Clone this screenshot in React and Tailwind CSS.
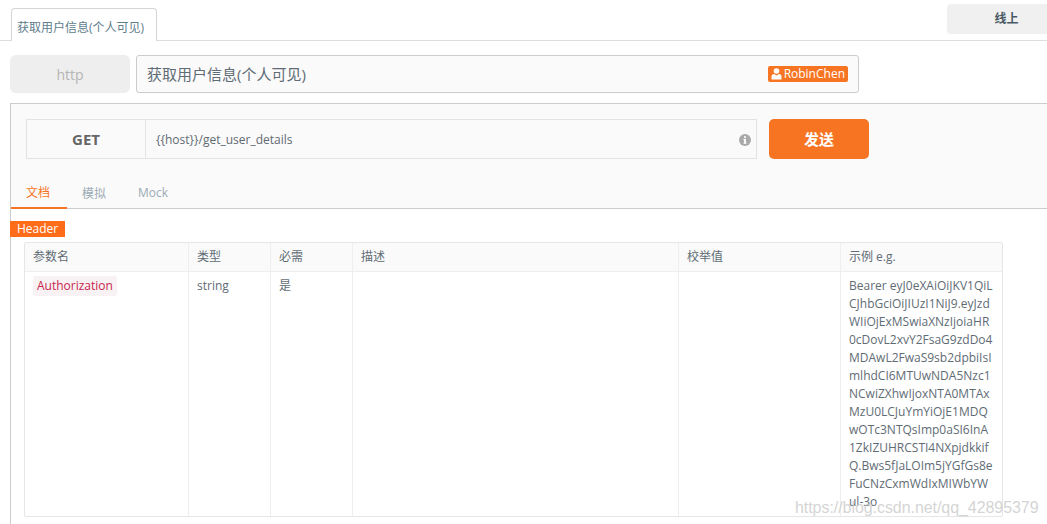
const font = { fontFamily: '"Open Sans","Noto Sans CJK SC",sans-serif' };
const lines = ["Bearer eyJ0eXAiOiJKV1QiL","CJhbGciOiJIUzI1NiJ9.eyJzd","WIiOjExMSwiaXNzIjoiaHR","0cDovL2xvY2FsaG9zdDo4","MDAwL2FwaS9sb2dpbiIsI","mlhdCI6MTUwNDA5Nzc1","NCwiZXhwIjoxNTA0MTAx","MzU0LCJuYmYiOjE1MDQ","wOTc3NTQsImp0aSI6InA","1ZkIZUHRCSTI4NXpjdkkif","Q.Bws5fJaLOIm5jYGfGs8e","FuCNzCxmWdIxMIWbYW","ul-3o"];
const Cell = ({ className = "", children }) => <div className={`px-2 border-r border-[#eeeeee] ${className}`}>{children}</div>;
const cols = ["w-[164px]", "w-[82px]", "w-[82px]", "w-[326px]", "w-[162px]", "flex-1 border-r-0"];
const heads = ["参数名", "类型", "必需", "描述", "校举值", "示例 e.g."];

export default function App() {
  return (
    <div className="relative w-[1047px] h-[524px] overflow-hidden bg-white text-[#55636d]" style={font}>
      <div className="flex items-start justify-between h-[41px] border-b border-[#dddddd] pl-[11px]">
        <div className="mt-2 w-[146px] h-[33px] bg-white border border-b-0 border-[#d4d4d4] rounded-t-[4px] text-[12px] text-[#607d8b] flex items-center pl-[5px] pt-[5px] whitespace-nowrap">获取用户信息(个人可见)</div>
        <div className="mt-1 w-[100px] h-[30px] bg-[#f0f0f0] rounded-l-[4px] text-[12px] font-semibold text-[#4a5a64] flex items-center justify-center pl-[19px]">线上</div>
      </div>
      <div className="flex gap-[6px] pl-[10px] mt-[14px]">
        <div className="w-[120px] h-[38px] bg-[#eeeeee] rounded-[6px] flex items-center justify-center text-[14px] text-[#b5b5b5]">http</div>
        <div className="w-[723px] h-[38px] bg-[#fafafa] border border-[#cccccc] rounded-[3px] flex items-center justify-between pl-[10px] pr-[10px] text-[15px] text-[#5f6c75]">
          <span>获取用户信息(个人可见)</span>
          <span className="h-[16px] px-[3px] bg-[#f77423] rounded-[2px] text-white text-[12px] flex items-center gap-[2px]">
            <svg width="11" height="12" viewBox="0 0 11 12" fill="white"><circle cx="5.5" cy="3" r="2.8"/><path d="M0.5 11.5V8.5C0.5 6.8 2 6 3 6L5.5 7.5L8 6C9 6 10.5 6.8 10.5 8.5V11.5Z"/></svg>
            RobinChen
          </span>
        </div>
      </div>
      <div className="ml-[10px] mt-[10px] border-l border-[#cccccc] h-[421px]">
        <div className="h-[106px] bg-[#fafafa] border-t border-b border-[#cccccc]">
          <div className="flex gap-3 pl-[15px] pt-[15px]">
            <div className="w-[731px] h-[40px] flex border border-[#e3e3e3]">
              <div className="w-[119px] border-r border-[#e3e3e3] flex items-center justify-center text-[15px] font-bold text-[#666666]">GET</div>
              <div className="flex-1 flex items-center justify-between pl-[10px] pr-[5px] pt-[2px] text-[12px] text-[#5f6a72]">
                <span>{"{{host}}/get_user_details"}</span>
                <svg width="12" height="12" viewBox="0 0 12 12"><circle cx="6" cy="6" r="6" fill="#aaaaaa"/><rect x="5" y="5" width="2" height="4.5" fill="#fafafa"/><rect x="4.4" y="5" width="2" height="1" fill="#fafafa"/><rect x="4.4" y="8.6" width="3.2" height="1" fill="#fafafa"/><circle cx="6" cy="3.2" r="1.1" fill="#fafafa"/></svg>
              </div>
            </div>
            <div className="w-[100px] h-[40px] bg-[#f77423] rounded-[5px] text-white font-bold text-[15px] flex items-center justify-center">发送</div>
          </div>
          <div className="flex mt-[17px] text-[12px] text-[#9aabb5]">
            <div className="w-[56px] h-[33px] border-b-2 border-[#f77423] text-[#f77423] flex items-center justify-center pr-[2px] pt-[2px]">文档</div>
            <div className="w-[56px] h-[33px] flex items-center justify-center pr-[2px] pt-[2px]">模拟</div>
            <div className="w-[62px] h-[33px] flex items-center justify-center pr-[2px]">Mock</div>
          </div>
        </div>
        <div className="mt-3 -ml-px w-[55px] h-[16px] bg-[#ff6c1a] text-white text-[12px] flex items-center justify-center">Header</div>
        <div className="mt-[5px] ml-[13px] w-[979px] h-[275px] border border-[#e6e6e6] rounded-[2px] overflow-hidden text-[12px] text-[#5f6c75]">
          <div className="flex h-[29px] bg-[#fafafa] border-b border-[#eeeeee]">
            {heads.map((h, i) => <Cell key={h} className={`${cols[i]} flex items-center`}>{h}</Cell>)}
          </div>
          <div className="flex h-[245px]">
            <Cell className={`${cols[0]} pt-1`}><span className="inline-block h-[20px] leading-[20px] px-1 bg-[#f9f2f4] rounded-[2px] text-[#c7254e] text-[12px]">Authorization</span></Cell>
            <Cell className={`${cols[1]} pt-[5px] leading-[18px]`}>string</Cell>
            <Cell className={`${cols[2]} pt-[5px] leading-[18px]`}>是</Cell>
            <Cell className={cols[3]} />
            <Cell className={cols[4]} />
            <Cell className={`${cols[5]} pt-[5px] leading-[18px] whitespace-nowrap`}>
              {lines.map(l => <div key={l}>{l}</div>)}
            </Cell>
          </div>
        </div>
      </div>
      <div className="absolute left-[795px] top-[496px] text-[16px] tracking-[-0.06px] text-[#c9c9c9]/80 whitespace-nowrap" style={{ fontFamily: '"Liberation Sans",sans-serif' }}>https://blog.csdn.net/qq_42895379</div>
    </div>
  );
}
